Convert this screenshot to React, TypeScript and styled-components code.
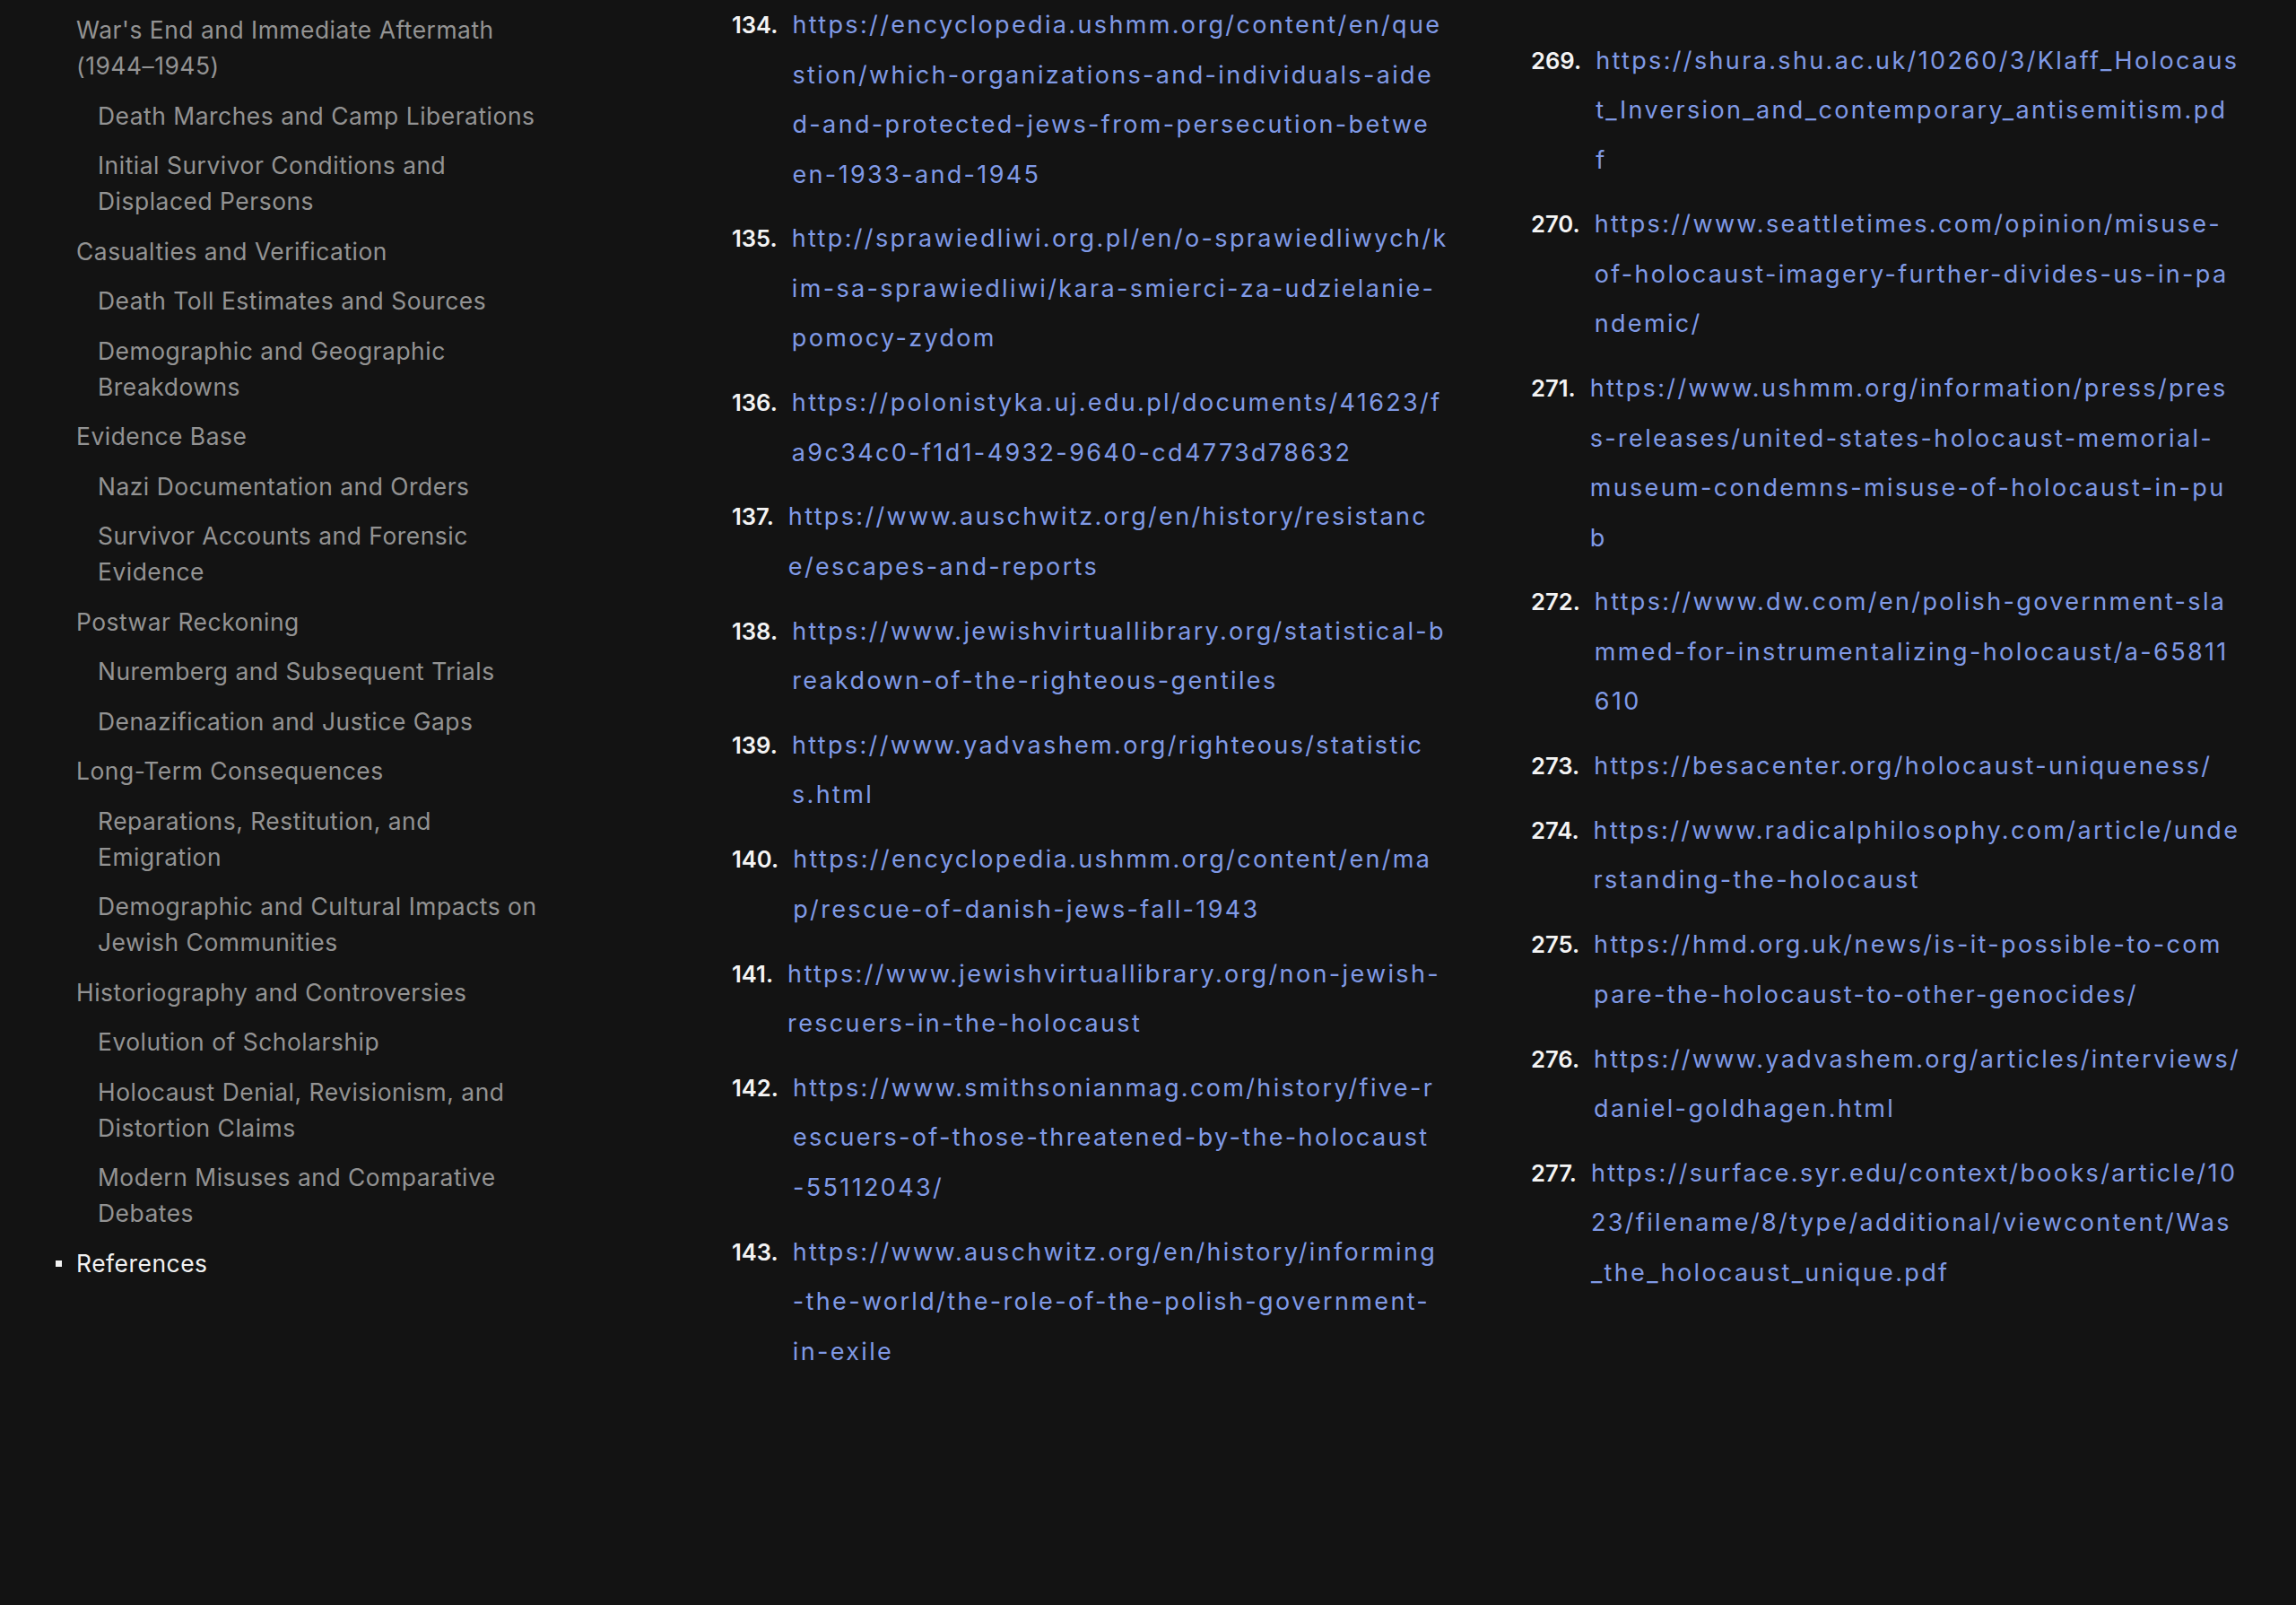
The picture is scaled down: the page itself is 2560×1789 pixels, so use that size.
import React from "react";
import styled, { createGlobalStyle } from "styled-components";

const GlobalStyle = createGlobalStyle`
  html, body {
    margin: 0;
    padding: 0;
    background: #131313;
  }
  body {
    font-family: Inter, "Noto Sans", "DejaVu Sans", sans-serif;
    -webkit-font-smoothing: antialiased;
  }
  #root {
    min-height: 100vh;
  }
`;

const Page = styled.div`
  display: flex;
  align-items: flex-start;
  min-height: 100vh;
  background: #131313;
`;

const Sidebar = styled.nav`
  flex: 0 0 816px;
  box-sizing: border-box;
  padding: 13px 0 0 85px;
`;

const TocList = styled.ul`
  list-style: none;
  margin: 0;
  padding: 0;
  width: 530px;
  display: flex;
  flex-direction: column;
  gap: 15.5px;
`;

const TocItem = styled.li<{ $sub?: boolean; $active?: boolean }>`
  position: relative;
  padding-left: ${(p) => (p.$sub ? "24px" : "0")};
  font-size: 26.4px;
  line-height: 40px;
  letter-spacing: 0.02em;
  color: ${(p) => (p.$active ? "#f2f2f2" : "#939393")};

  ${(p) =>
    p.$active &&
    `
    &::before {
      content: "";
      position: absolute;
      left: -23px;
      top: 17px;
      width: 7px;
      height: 7px;
      background: #f2f2f2;
    }
  `}
`;

const Main = styled.main`
  flex: 0 0 auto;
  display: grid;
  grid-template-columns: 800px 800px;
  column-gap: 91px;
  align-items: start;
`;

const RefColumn = styled.ol<{ $offset?: number }>`
  list-style: none;
  margin: 0;
  padding: ${(p) => p.$offset ?? 0}px 0 0 0;
  display: flex;
  flex-direction: column;
  gap: 16.3px;
`;

const RefItem = styled.li`
  display: flex;
  align-items: baseline;
  font-size: 25.6px;
  line-height: 55.5px;
`;

const RefNum = styled.span`
  flex: 0 0 auto;
  margin-right: 16px;
  color: #f4f4f4;
  font-weight: 600;
`;

const RefLink = styled.a`
  display: flex;
  flex-direction: column;
  color: #809ae6;
  font-size: 27px;
  text-decoration: none;
  letter-spacing: 2.35px;
`;

const RefLine = styled.span`
  white-space: nowrap;
`;

type Toc = { text: string; sub?: boolean; active?: boolean };

const toc: Toc[] = [
  { text: "War's End and Immediate Aftermath (1944–1945)" },
  { text: "Death Marches and Camp Liberations", sub: true },
  { text: "Initial Survivor Conditions and Displaced Persons", sub: true },
  { text: "Casualties and Verification" },
  { text: "Death Toll Estimates and Sources", sub: true },
  { text: "Demographic and Geographic Breakdowns", sub: true },
  { text: "Evidence Base" },
  { text: "Nazi Documentation and Orders", sub: true },
  { text: "Survivor Accounts and Forensic Evidence", sub: true },
  { text: "Postwar Reckoning" },
  { text: "Nuremberg and Subsequent Trials", sub: true },
  { text: "Denazification and Justice Gaps", sub: true },
  { text: "Long-Term Consequences" },
  { text: "Reparations, Restitution, and Emigration", sub: true },
  { text: "Demographic and Cultural Impacts on Jewish Communities", sub: true },
  { text: "Historiography and Controversies" },
  { text: "Evolution of Scholarship", sub: true },
  { text: "Holocaust Denial, Revisionism, and Distortion Claims", sub: true },
  { text: "Modern Misuses and Comparative Debates", sub: true },
  { text: "References", active: true },
];

type Ref = { n: number; lines: string[] };

const leftRefs: Ref[] = [
  {
    n: 134,
    lines: [
      "https://encyclopedia.ushmm.org/content/en/que",
      "stion/which-organizations-and-individuals-aide",
      "d-and-protected-jews-from-persecution-betwe",
      "en-1933-and-1945",
    ],
  },
  {
    n: 135,
    lines: [
      "http://sprawiedliwi.org.pl/en/o-sprawiedliwych/k",
      "im-sa-sprawiedliwi/kara-smierci-za-udzielanie-",
      "pomocy-zydom",
    ],
  },
  {
    n: 136,
    lines: [
      "https://polonistyka.uj.edu.pl/documents/41623/f",
      "a9c34c0-f1d1-4932-9640-cd4773d78632",
    ],
  },
  {
    n: 137,
    lines: ["https://www.auschwitz.org/en/history/resistanc", "e/escapes-and-reports"],
  },
  {
    n: 138,
    lines: [
      "https://www.jewishvirtuallibrary.org/statistical-b",
      "reakdown-of-the-righteous-gentiles",
    ],
  },
  {
    n: 139,
    lines: ["https://www.yadvashem.org/righteous/statistic", "s.html"],
  },
  {
    n: 140,
    lines: [
      "https://encyclopedia.ushmm.org/content/en/ma",
      "p/rescue-of-danish-jews-fall-1943",
    ],
  },
  {
    n: 141,
    lines: [
      "https://www.jewishvirtuallibrary.org/non-jewish-",
      "rescuers-in-the-holocaust",
    ],
  },
  {
    n: 142,
    lines: [
      "https://www.smithsonianmag.com/history/five-r",
      "escuers-of-those-threatened-by-the-holocaust",
      "-55112043/",
    ],
  },
  {
    n: 143,
    lines: [
      "https://www.auschwitz.org/en/history/informing",
      "-the-world/the-role-of-the-polish-government-",
      "in-exile",
    ],
  },
];

const rightRefs: Ref[] = [
  {
    n: 269,
    lines: [
      "https://shura.shu.ac.uk/10260/3/Klaff_Holocaus",
      "t_Inversion_and_contemporary_antisemitism.pd",
      "f",
    ],
  },
  {
    n: 270,
    lines: [
      "https://www.seattletimes.com/opinion/misuse-",
      "of-holocaust-imagery-further-divides-us-in-pa",
      "ndemic/",
    ],
  },
  {
    n: 271,
    lines: [
      "https://www.ushmm.org/information/press/pres",
      "s-releases/united-states-holocaust-memorial-",
      "museum-condemns-misuse-of-holocaust-in-pu",
      "b",
    ],
  },
  {
    n: 272,
    lines: [
      "https://www.dw.com/en/polish-government-sla",
      "mmed-for-instrumentalizing-holocaust/a-65811",
      "610",
    ],
  },
  { n: 273, lines: ["https://besacenter.org/holocaust-uniqueness/"] },
  {
    n: 274,
    lines: [
      "https://www.radicalphilosophy.com/article/unde",
      "rstanding-the-holocaust",
    ],
  },
  {
    n: 275,
    lines: [
      "https://hmd.org.uk/news/is-it-possible-to-com",
      "pare-the-holocaust-to-other-genocides/",
    ],
  },
  {
    n: 276,
    lines: [
      "https://www.yadvashem.org/articles/interviews/",
      "daniel-goldhagen.html",
    ],
  },
  {
    n: 277,
    lines: [
      "https://surface.syr.edu/context/books/article/10",
      "23/filename/8/type/additional/viewcontent/Was",
      "_the_holocaust_unique.pdf",
    ],
  },
];

function RefList({ refs, offset }: { refs: Ref[]; offset?: number }) {
  return (
    <RefColumn $offset={offset} start={refs[0].n}>
      {refs.map((r) => (
        <RefItem key={r.n}>
          <RefNum>{r.n}.</RefNum>
          <RefLink href={r.lines.join("")}>
            {r.lines.map((l, i) => (
              <RefLine key={i}>{l}</RefLine>
            ))}
          </RefLink>
        </RefItem>
      ))}
    </RefColumn>
  );
}

export default function App() {
  return (
    <>
      <GlobalStyle />
      <Page>
        <Sidebar>
          <TocList>
            {toc.map((t) => (
              <TocItem key={t.text} $sub={t.sub} $active={t.active}>
                {t.text}
              </TocItem>
            ))}
          </TocList>
        </Sidebar>
        <Main>
          <RefList refs={leftRefs} />
          <RefList refs={rightRefs} offset={39.5} />
        </Main>
      </Page>
    </>
  );
}
